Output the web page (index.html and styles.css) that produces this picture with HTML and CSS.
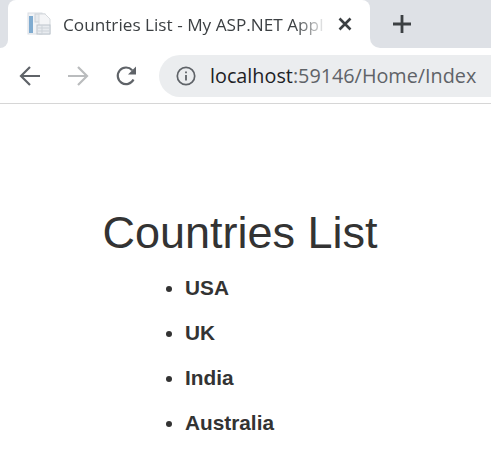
FILE: index.html
```html
<!DOCTYPE html>
<html lang="en">
<head>
    <meta charset="UTF-8">
    <title>Countries List - My ASP.NET Application</title>
    <link rel="stylesheet" href="styles.css">
</head>
<body>

<!-- Browser tab strip -->
<div class="tabstrip">
    <div class="strip-edge"></div>
    <div class="tab">
        <svg class="favicon" width="26" height="26" viewBox="0 0 26 26">
            <rect x="2" y="2" width="14" height="21" fill="#f1f3f6" stroke="#d9dee4"/>
            <rect x="3" y="5" width="4" height="17" fill="#7fabd0"/>
            <rect x="9" y="3" width="10" height="8" fill="#e6e9ed" stroke="#ccd1d7"/>
            <path d="M19 3l5 5v15H13V3z" fill="#f4f5f7" stroke="#d6dade"/>
            <rect x="11" y="14" width="13" height="9" fill="#e8ebef" stroke="#bcc4cc"/>
            <path d="M12 17h11M12 20h11M16 14v9" stroke="#cdd3d9" fill="none"/>
        </svg>
        <span class="tab-title">Countries List - My ASP.NET Appl</span>
        <svg class="tab-close" width="14" height="14" viewBox="0 0 14 14">
            <path d="M1.5 1.5l11 11M12.500 1.5l-11 11" stroke="#3c4043" stroke-width="2.600" fill="none"/>
        </svg>
    </div>
    <div class="strip-rest">
        <svg class="new-tab" width="20" height="20" viewBox="0 0 20 20">
            <path d="M10 1v18M1 10h18" stroke="#3c4043" stroke-width="2.800" fill="none"/>
        </svg>
    </div>
</div>

<!-- Browser toolbar -->
<div class="toolbar">
    <svg class="nav-icon" width="24" height="24" viewBox="0 0 24 24">
        <path d="M22 12H3M12 3l-9 9 9 9" stroke="#5f6368" stroke-width="2.200" fill="none"/>
    </svg>
    <svg class="nav-icon" width="24" height="24" viewBox="0 0 24 24">
        <path d="M2 12h19M12 3l9 9-9 9" stroke="#babcbe" stroke-width="2.200" fill="none"/>
    </svg>
    <svg class="nav-icon" width="24" height="24" viewBox="0 0 24 24">
        <path d="M19.500 15.500A8.300 8.300 0 1 1 18.200 6.200" stroke="#5f6368" stroke-width="2.200" fill="none"/>
        <path d="M22 2.500v8h-8z" fill="#5f6368"/>
    </svg>
    <div class="omnibox">
        <svg class="info-icon" width="20" height="20" viewBox="0 0 20 20">
            <circle cx="10" cy="10" r="8.700" stroke="#5f6368" stroke-width="1.700" fill="none"/>
            <path d="M10 9v5.500M10 5.500v1.800" stroke="#5f6368" stroke-width="1.800" fill="none"/>
        </svg>
        <span class="url"><span class="url-host">localhost</span>:59146/Home/Index</span>
    </div>
</div>

<!-- Page content -->
<div class="page">
    <h1>Countries List</h1>
    <ul class="country-list">
        <li>USA</li>
        <li>UK</li>
        <li>India</li>
        <li>Australia</li>
    </ul>
</div>

</body>
</html>
```

FILE: styles.css
```css
body {
    margin: 0;
    height: 461px;
    overflow: hidden;
    background-color: #fff;
    font-family: "Liberation Sans", Arial, sans-serif;
}

/* Tab strip */
.tabstrip {
    display: flex;
    height: 48px;
    background: linear-gradient(#dee1e6 50%, #fff 50%);
}
.strip-edge {
    width: 8px;
    background-color: #dee1e6;
    border-radius: 0 0 8px 0;
}
.tab {
    width: 362px;
    display: flex;
    align-items: center;
    padding: 0 18px;
    box-sizing: border-box;
    background-color: #fff;
    border-radius: 8px 8px 0 0;
}
.favicon {
    flex: none;
    margin-right: 11px;
}
.tab-title {
    flex: 1;
    white-space: nowrap;
    font-family: "Open Sans", sans-serif;
    font-size: 17.200px;
    color: #3c4043;
    -webkit-mask-image: linear-gradient(to right, #000 232px, transparent 264px);
    mask-image: linear-gradient(to right, #000 232px, transparent 264px);
}
.tab-close {
    flex: none;
}
.strip-rest {
    flex: 1;
    display: flex;
    align-items: center;
    padding-left: 22px;
    background-color: #dee1e6;
    border-radius: 0 0 0 10px;
}

/* Toolbar */
.toolbar {
    height: 56px;
    display: flex;
    align-items: center;
    padding-left: 18px;
    box-sizing: border-box;
    border-bottom: 1px solid #d6d6d6;
}
.nav-icon {
    flex: none;
    margin-right: 24px;
}
.omnibox {
    flex: 1;
    height: 42px;
    margin-left: -3px;
    display: flex;
    align-items: center;
    padding-left: 17px;
    background-color: #ebedef;
    border-radius: 21px 0 0 21px;
}
.info-icon {
    flex: none;
    margin-right: 14px;
}
.url {
    font-family: "Open Sans", sans-serif;
    font-size: 19.800px;
    color: #5f6368;
    white-space: nowrap;
}
.url-host {
    color: #202124;
}

/* Page */
.page {
    color: #333;
}
h1 {
    margin: 104px 0 0 102.500px;
    font-size: 45px;
    font-weight: 400;
    line-height: 50px;
}
.country-list {
    margin: 7px 0 0;
    padding-left: 185px;
}
.country-list li {
    height: 45px;
    line-height: 45px;
    font-size: 20.800px;
    font-weight: 700;
}
```
